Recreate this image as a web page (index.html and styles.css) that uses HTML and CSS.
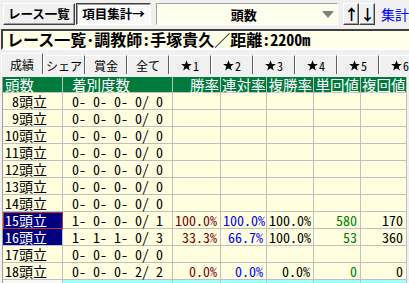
FILE: index.html
```
<!DOCTYPE html>
<html lang="ja">
<head>
    <meta charset="UTF-8">
    <title>レース一覧 項目集計</title>
    <link rel="stylesheet" href="styles.css">
</head>
<body>
    <div class="toolbar">
        <button class="btn">レース一覧</button>
        <button class="btn btn-on">項目集計→</button>
        <div class="combo">
            <span class="combo-text">頭数</span>
            <span class="combo-arrow"></span>
        </div>
        <div class="sort">
            <button class="btn btn-arrow">↑</button>
            <button class="btn btn-arrow">↓</button>
        </div>
        <span class="link">集計</span>
    </div>

    <div class="title">レース一覧<span class="hw">･</span>調教師<span class="hw">:</span>手塚貴久／距離<span class="hw">:2200m</span></div>

    <div class="tabs">
        <div class="tab active">成績</div>
        <div class="tab">シェア</div>
        <div class="tab">賞金</div>
        <div class="tab">全て</div>
        <div class="tab"><svg class="star" viewBox="0 0 12 12"><polygon points="6,0.3 7.5,4.3 11.8,4.4 8.4,7.1 9.6,11.4 6,8.9 2.4,11.4 3.6,7.1 0.2,4.4 4.5,4.3"/></svg><span class="hw">1</span></div>
        <div class="tab"><svg class="star" viewBox="0 0 12 12"><polygon points="6,0.3 7.5,4.3 11.8,4.4 8.4,7.1 9.6,11.4 6,8.9 2.4,11.4 3.6,7.1 0.2,4.4 4.5,4.3"/></svg><span class="hw">2</span></div>
        <div class="tab"><svg class="star" viewBox="0 0 12 12"><polygon points="6,0.3 7.5,4.3 11.8,4.4 8.4,7.1 9.6,11.4 6,8.9 2.4,11.4 3.6,7.1 0.2,4.4 4.5,4.3"/></svg><span class="hw">3</span></div>
        <div class="tab"><svg class="star" viewBox="0 0 12 12"><polygon points="6,0.3 7.5,4.3 11.8,4.4 8.4,7.1 9.6,11.4 6,8.9 2.4,11.4 3.6,7.1 0.2,4.4 4.5,4.3"/></svg><span class="hw">4</span></div>
        <div class="tab"><svg class="star" viewBox="0 0 12 12"><polygon points="6,0.3 7.5,4.3 11.8,4.4 8.4,7.1 9.6,11.4 6,8.9 2.4,11.4 3.6,7.1 0.2,4.4 4.5,4.3"/></svg><span class="hw">5</span></div>
        <div class="tab"><svg class="star" viewBox="0 0 12 12"><polygon points="6,0.3 7.5,4.3 11.8,4.4 8.4,7.1 9.6,11.4 6,8.9 2.4,11.4 3.6,7.1 0.2,4.4 4.5,4.3"/></svg><span class="hw">6</span></div>
    </div>

    <div class="grid">
        <table>
            <colgroup>
                <col class="c-head">
                <col class="c-rank">
                <col class="c-rate">
                <col class="c-rate2">
                <col class="c-rate3">
                <col class="c-ret">
                <col class="c-ret2">
            </colgroup>
            <thead>
                <tr>
                    <th>頭数</th>
                    <th class="h-rank">着別度数</th>
                    <th class="h-r">勝率</th>
                    <th class="h-r">連対率</th>
                    <th class="h-r">複勝率</th>
                    <th class="h-r">単回値</th>
                    <th class="h-r">複回値</th>
                </tr>
            </thead>
            <tbody>
                <tr><td class="name"><span class="hw"> 8</span>頭立</td><td class="hw"> 0- 0- 0- 0/ 0</td><td></td><td></td><td></td><td></td><td></td></tr>
                <tr><td class="name"><span class="hw"> 9</span>頭立</td><td class="hw"> 0- 0- 0- 0/ 0</td><td></td><td></td><td></td><td></td><td></td></tr>
                <tr><td class="name"><span class="hw">10</span>頭立</td><td class="hw"> 0- 0- 0- 0/ 0</td><td></td><td></td><td></td><td></td><td></td></tr>
                <tr><td class="name"><span class="hw">11</span>頭立</td><td class="hw"> 0- 0- 0- 0/ 0</td><td></td><td></td><td></td><td></td><td></td></tr>
                <tr><td class="name"><span class="hw">12</span>頭立</td><td class="hw"> 0- 0- 0- 0/ 0</td><td></td><td></td><td></td><td></td><td></td></tr>
                <tr><td class="name"><span class="hw">13</span>頭立</td><td class="hw"> 0- 0- 0- 0/ 0</td><td></td><td></td><td></td><td></td><td></td></tr>
                <tr><td class="name"><span class="hw">14</span>頭立</td><td class="hw"> 0- 0- 0- 0/ 0</td><td></td><td></td><td></td><td></td><td></td></tr>
                <tr>
                    <td class="name sel focus"><span class="hw">15</span>頭立</td>
                    <td class="hw"> 1- 0- 0- 0/ 1</td>
                    <td class="hw num win">100.0%</td>
                    <td class="hw num place">100.0%</td>
                    <td class="hw num">100.0%</td>
                    <td class="hw num ret">580</td>
                    <td class="hw num">170</td>
                </tr>
                <tr>
                    <td class="name sel"><span class="hw">16</span>頭立</td>
                    <td class="hw"> 1- 1- 1- 0/ 3</td>
                    <td class="hw num win">33.3%</td>
                    <td class="hw num place">66.7%</td>
                    <td class="hw num">100.0%</td>
                    <td class="hw num ret">53</td>
                    <td class="hw num">360</td>
                </tr>
                <tr><td class="name"><span class="hw">17</span>頭立</td><td class="hw"> 0- 0- 0- 0/ 0</td><td></td><td></td><td></td><td></td><td></td></tr>
                <tr>
                    <td class="name"><span class="hw">18</span>頭立</td>
                    <td class="hw"> 0- 0- 0- 2/ 2</td>
                    <td class="hw num win">0.0%</td>
                    <td class="hw num place">0.0%</td>
                    <td class="hw num">0.0%</td>
                    <td class="hw num ret">0</td>
                    <td class="hw num">0</td>
                </tr>
                <tr class="total">
                    <td class="name"></td>
                    <td></td><td></td><td></td><td></td><td></td><td></td>
                </tr>
            </tbody>
        </table>
    </div>
</body>
</html>
```

FILE: styles.css
```
html, body {
    margin: 0;
    height: 283px;
    overflow: hidden;
}
body {
    background-color: #f0f0f0;
    font-family: "Noto Sans CJK JP", sans-serif;
    color: #000;
}
.hw {
    font-feature-settings: "hwid";
}

/* top bar */
.toolbar {
    display: flex;
    align-items: center;
    height: 22px;
    padding: 3px 0 0 3px;
    white-space: nowrap;
}
.btn {
    box-sizing: border-box;
    height: 22px;
    margin: 0;
    padding: 0;
    font-family: "Noto Sans CJK JP", sans-serif;
    font-size: 12.5px;
    font-weight: bold;
    line-height: 18px;
    background: #f0f0f0;
    border: 1px solid;
    border-color: #fff #404040 #404040 #fff;
    box-shadow: inset -1px -1px #a0a0a0;
    color: #000;
}
.toolbar > .btn {
    width: 73px;
}
.toolbar > .btn-on {
    width: 77px;
    margin-left: 1px;
    background: #fafafa;
    border-color: #404040 #fff #fff #404040;
    box-shadow: inset 1px 1px #a0a0a0;
}
.combo {
    box-sizing: border-box;
    display: flex;
    align-items: center;
    width: 185px;
    height: 22px;
    margin-left: 5px;
    background: #fffff0;
    border: 1px solid;
    border-color: #a0a0a0 #fff #fff #a0a0a0;
}
.combo-text {
    flex: 1;
    text-align: center;
    font-size: 13px;
    font-weight: bold;
    padding-left: 8px;
}
.combo-arrow {
    width: 0;
    height: 0;
    margin-right: 3px;
    border-left: 6px solid transparent;
    border-right: 6px solid transparent;
    border-top: 7px solid #808080;
}
.sort {
    display: flex;
    margin-left: 5px;
}
.btn-arrow {
    width: 16px;
    font-size: 15px;
    line-height: 18px;
}
.link {
    margin-left: 6px;
    color: #0000ff;
    font-size: 14px;
}

/* title */
.title {
    margin: 4px -10px 0 1px;
    height: 17px;
    padding: 0 4px;
    background: #ffffe8;
    border: 2px solid;
    border-color: #404040 #fff #fff #404040;
    font-size: 16px;
    font-weight: bold;
    line-height: 17px;
    white-space: nowrap;
}

/* tabs */
.tabs {
    display: flex;
    align-items: flex-end;
    height: 21px;
    margin-top: 3px;
    padding-left: 1px;
    overflow: hidden;
    white-space: nowrap;
}
.tab {
    box-sizing: border-box;
    display: flex;
    align-items: center;
    justify-content: center;
    gap: 1px;
    flex: 0 0 42px;
    height: 19px;
    font-size: 12px;
    line-height: 17px;
    border-top: 1px solid #fff;
    border-left: 1px solid #fff;
    border-right: 1px solid #606060;
}
.tab.active {
    height: 21px;
    background: #f0f0f0;
}
.star {
    width: 11px;
    height: 11px;
    fill: #000;
}

/* grid */
.grid {
    margin: 3px 0 0 2px;
    border-left: 1px solid #a0a0a0;
}
table {
    table-layout: fixed;
    width: 404px;
    border-collapse: separate;
    border-spacing: 0;
}
.c-head { width: 60px; }
.c-rank { width: 110px; }
.c-rate { width: 48px; }
.c-rate2 { width: 46px; }
.c-rate3 { width: 47px; }
.c-ret { width: 47px; }
.c-ret2 { width: 46px; }

th, td {
    box-sizing: border-box;
    height: 17px;
    padding: 0 2px;
    border-right: 1px solid #c0c0c0;
    border-bottom: 1px solid #c0c0c0;
    font-size: 14px;
    font-weight: normal;
    line-height: 16px;
    white-space: pre;
    text-align: left;
}
th {
    height: 16px;
    line-height: 15px;
    background: #007a3d;
    color: #fff;
    font-size: 14.5px;
    border-color: #c0c0c0;
}
th.h-rank {
    padding-left: 9px;
}
th.h-r {
    padding: 0 1px;
    text-align: right;
}
td {
    background: #ffffe0;
}
td.num {
    text-align: right;
    padding-right: 3px;
}
td.win { color: #800000; }
td.place { color: #0000ff; }
td.ret { color: #008000; }
td.sel {
    background: #000080;
    color: #fff;
}
td.focus {
    outline: 1px solid #c03030;
    outline-offset: -1px;
}
tr.total td {
    background: #a0ffff;
}
tr.total td.name {
    background: #f8f8f8;
}
```
